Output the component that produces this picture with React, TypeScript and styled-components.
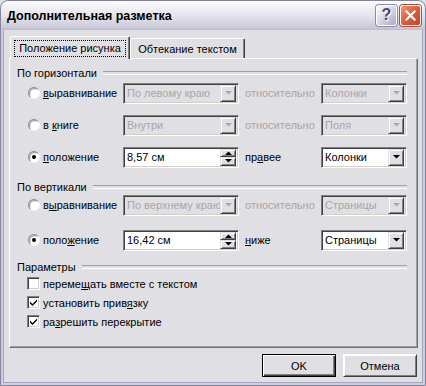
import * as React from "react";
import styled, { createGlobalStyle } from "styled-components";

const GlobalStyle = createGlobalStyle`
  html, body {
    margin: 0;
    padding: 0;
    background: #e0dfe3;
  }
  body {
    font-family: "Liberation Sans", Arial, sans-serif;
    font-size: 11px;
    color: #000;
  }
  * {
    box-sizing: border-box;
  }
`;

function Radio({ checked }: { checked?: boolean }) {
  return (
    <svg width="12" height="12" viewBox="0 0 12 12">
      <defs>
        <linearGradient id="rg" x1="0" y1="0" x2="1" y2="1">
          <stop offset="0" stopColor="#808080" />
          <stop offset="0.5" stopColor="#9a9a9e" />
          <stop offset="0.55" stopColor="#f4f4f4" />
          <stop offset="1" stopColor="#ffffff" />
        </linearGradient>
      </defs>
      <circle cx="6" cy="6" r="6" fill="url(#rg)" />
      <circle cx="6" cy="6" r="4.8" fill="#ffffff" />
      <path d="M2 8.2 A4.8 4.8 0 0 1 8.2 2" stroke="#404040" strokeWidth="0.9" fill="none" opacity="0.55" />
      {checked && <circle cx="6" cy="6" r="2" fill="#000" />}
    </svg>
  );
}

function CheckMark() {
  return (
    <svg width="9" height="9" viewBox="0 0 9 9">
      <path d="M1 3.5 L3.5 6 L8 1.5 L8 3.5 L3.5 8 L1 5.5 Z" fill="#000" />
    </svg>
  );
}

function Arrow({ disabled, up }: { disabled?: boolean; up?: boolean }) {
  const d = up ? "M0 4 L3.5 0.5 L7 4 Z" : "M0 0 L7 0 L3.5 3.5 Z";
  return (
    <svg width="7" height="4" viewBox="0 0 7 4">
      <path d={d} fill={disabled ? "#a7a6aa" : "#000"} />
    </svg>
  );
}

function Combo({ value, width, disabled }: { value: string; width: number; disabled?: boolean }) {
  return (
    <ComboBox $w={width} $disabled={disabled}>
      <ComboText $disabled={disabled}>{value}</ComboText>
      <ArrowButton>
        <Arrow disabled={disabled} />
      </ArrowButton>
    </ComboBox>
  );
}

function Spin({ value }: { value: string }) {
  return (
    <ComboBox $w={116}>
      <ComboText>{value}</ComboText>
      <SpinStack>
        <SpinHalf>
          <Arrow up />
        </SpinHalf>
        <SpinHalf>
          <Arrow />
        </SpinHalf>
      </SpinStack>
    </ComboBox>
  );
}

export default function App() {
  return (
    <>
      <GlobalStyle />
      <Window>
        <TitleBar>
          <Title>Дополнительная разметка</Title>
          <CaptionButton $kind="help">?</CaptionButton>
          <CaptionButton $kind="close">
            <svg width="11" height="11" viewBox="0 0 11 11">
              <path d="M1.5 1.5 L9.5 9.5 M9.5 1.5 L1.5 9.5" stroke="#fff" strokeWidth="2.2" strokeLinecap="square" />
            </svg>
          </CaptionButton>
        </TitleBar>
        <Body>
          <TabRow>
            <Tab $active>
              <FocusRect>Положение рисунка</FocusRect>
            </Tab>
            <Tab>Обтекание текстом</Tab>
          </TabRow>
          <Panel>
            <GroupHeader>По горизонтали</GroupHeader>
            <Row $top={2}>
              <Option>
                <Radio />
                <span>
                  <u>в</u>ыравнивание
                </span>
              </Option>
              <Combo value="По левому краю" width={116} disabled />
              <RelLabel $disabled>относительно</RelLabel>
              <Combo value="Колонки" width={86} disabled />
            </Row>
            <Row $top={10}>
              <Option>
                <Radio />
                <span>
                  в <u>к</u>ниге
                </span>
              </Option>
              <Combo value="Внутри" width={116} disabled />
              <RelLabel $disabled>относительно</RelLabel>
              <Combo value="Поля" width={86} disabled />
            </Row>
            <Row $top={10}>
              <Option>
                <Radio checked />
                <span>
                  <u>п</u>оложение
                </span>
              </Option>
              <Spin value="8,57 см" />
              <RelLabel>
                пр<u>а</u>вее
              </RelLabel>
              <Combo value="Колонки" width={86} />
            </Row>

            <GroupHeader $top={12}>По вертикали</GroupHeader>
            <Row $top={0}>
              <Option>
                <Radio />
                <span>
                  в<u>ы</u>равнивание
                </span>
              </Option>
              <Combo value="По верхнему краю" width={116} disabled />
              <RelLabel $disabled>относительно</RelLabel>
              <Combo value="Страницы" width={86} disabled />
            </Row>
            <Row $top={13}>
              <Option>
                <Radio checked />
                <span>
                  поло<u>ж</u>ение
                </span>
              </Option>
              <Spin value="16,42 см" />
              <RelLabel>
                <u>н</u>иже
              </RelLabel>
              <Combo value="Страницы" width={86} />
            </Row>

            <GroupHeader $top={9}>Параметры</GroupHeader>
            <CheckRow>
              <CheckBox />
              <span>
                переме<u>щ</u>ать вместе с текстом
              </span>
            </CheckRow>
            <CheckRow>
              <CheckBox>
                <CheckMark />
              </CheckBox>
              <span>
                установить прив<u>я</u>зку
              </span>
            </CheckRow>
            <CheckRow>
              <CheckBox>
                <CheckMark />
              </CheckBox>
              <span>
                ра<u>з</u>решить перекрытие
              </span>
            </CheckRow>
          </Panel>
          <ButtonRow>
            <PushButton $default>OK</PushButton>
            <PushButton>Отмена</PushButton>
          </ButtonRow>
        </Body>
      </Window>
    </>
  );
}

const Window = styled.div`
  width: 426px;
  height: 386px;
  display: flex;
  flex-direction: column;
  border: 1px solid #85849f;
  border-radius: 8px 8px 0 0;
  background: #cfcedc;
  padding: 0 2px 2px;
  overflow: hidden;
`;

const TitleBar = styled.div`
  height: 29px;
  margin: 0 -2px;
  display: flex;
  align-items: center;
  padding: 0 4px 1px 6px;
  gap: 3px;
  background: linear-gradient(to bottom, #ffffff 0%, #f3f3f7 18%, #e2e1ea 55%, #cbcad9 90%, #bdbccd 100%);
  border-radius: 7px 7px 0 0;
`;

const Title = styled.div`
  flex: 1;
  font: bold 12.5px "Liberation Sans", Arial, sans-serif;
  color: #000;
  padding-top: 2px;
`;

const CaptionButton = styled.div<{ $kind: "help" | "close" }>`
  width: 21px;
  height: 21px;
  display: flex;
  align-items: center;
  justify-content: center;
  border-radius: 3px;
  border: 1px solid #fff;
  box-shadow: 0 0 0 1px ${(p) => (p.$kind === "close" ? "#b1503a" : "#8c8ba8")};
  background: ${(p) =>
    p.$kind === "close"
      ? "linear-gradient(135deg, #f09b7d 0%, #e0603f 45%, #c9402a 100%)"
      : "linear-gradient(135deg, #fdfdfe 0%, #d7d6e3 50%, #a9a8c0 100%)"};
  font: bold 16px "Liberation Sans", Arial, sans-serif;
  color: #4a4968;
  text-shadow: 1px 1px 0 #fff;
`;

const Body = styled.div`
  flex: 1;
  background: #e0dfe3;
  border: 1px solid #a6a5bd;
  border-top: none;
  padding: 6px 4px 5px 5px;
  display: flex;
  flex-direction: column;
`;

const TabRow = styled.div`
  height: 22px;
  display: flex;
  align-items: flex-end;
  padding-left: 1px;
`;

const Tab = styled.div<{ $active?: boolean }>`
  position: relative;
  z-index: ${(p) => (p.$active ? 1 : 0)};
  width: ${(p) => (p.$active ? 120 : 115)}px;
  height: ${(p) => (p.$active ? 23 : 20)}px;
  margin-bottom: ${(p) => (p.$active ? -1 : 0)}px;
  display: flex;
  align-items: center;
  justify-content: center;
  background: #e0dfe3;
  border-top: 1px solid #fff;
  border-left: 1px solid #fff;
  border-right: 1px solid #404040;
  border-radius: 2px 2px 0 0;
  box-shadow: inset -1px 0 0 #808080;
  padding-top: ${(p) => (p.$active ? 0 : 1)}px;
`;

const FocusRect = styled.span`
  width: 112px;
  height: 17px;
  display: flex;
  align-items: center;
  justify-content: center;
  border: 1px dotted #000;
`;

const Panel = styled.div`
  height: 290px;
  background: #e0dfe3;
  border-top: 1px solid #fff;
  border-left: 1px solid #fff;
  border-right: 1px solid #6f6f6f;
  border-bottom: 1px solid #6f6f6f;
  box-shadow: inset -1px -1px 0 #a0a0a4;
  padding: 7px 10px 0 7px;
  display: flex;
  flex-direction: column;
`;

const GroupHeader = styled.div<{ $top?: number }>`
  height: 14px;
  margin-top: ${(p) => p.$top ?? 0}px;
  display: flex;
  align-items: center;
  gap: 6px;
  &::after {
    content: "";
    flex: 1;
    height: 2px;
    border-top: 1px solid #a0a0a4;
    border-bottom: 1px solid #fff;
  }
`;

const Row = styled.div<{ $top: number }>`
  height: 22px;
  margin-top: ${(p) => p.$top}px;
  display: flex;
  align-items: center;
  padding-left: 11px;
`;

const Option = styled.div`
  width: 95px;
  display: flex;
  align-items: center;
  gap: 3px;
`;

const RelLabel = styled.div<{ $disabled?: boolean }>`
  width: 76px;
  margin-left: 6px;
  color: ${(p) => (p.$disabled ? "#a7a6aa" : "#000")};
`;

const ComboBox = styled.div<{ $w: number; $disabled?: boolean }>`
  width: ${(p) => p.$w}px;
  height: 21px;
  display: flex;
  align-items: center;
  padding: 2px;
  background: ${(p) => (p.$disabled ? "#e0dfe3" : "#fff")};
  border: 1px solid;
  border-color: #808080 #fff #fff #808080;
  box-shadow: inset 1px 1px 0 #404040, inset -1px -1px 0 #d4d0c8;
`;

const ComboText = styled.span<{ $disabled?: boolean }>`
  flex: 1;
  padding-left: 1px;
  white-space: nowrap;
  overflow: hidden;
  color: ${(p) => (p.$disabled ? "#a7a6aa" : "#000")};
`;

const ArrowButton = styled.div`
  width: 16px;
  height: 17px;
  display: flex;
  align-items: center;
  justify-content: center;
  background: #e0dfe3;
  border: 1px solid;
  border-color: #e0dfe3 #404040 #404040 #e0dfe3;
  box-shadow: inset 1px 1px 0 #fff, inset -1px -1px 0 #808080;
`;

const SpinStack = styled.div`
  width: 16px;
  height: 17px;
  display: flex;
  flex-direction: column;
`;

const SpinHalf = styled.div`
  flex: 1;
  display: flex;
  align-items: center;
  justify-content: center;
  background: #e0dfe3;
  border: 1px solid;
  border-color: #e0dfe3 #404040 #404040 #e0dfe3;
  box-shadow: inset 1px 1px 0 #fff, inset -1px -1px 0 #808080;
`;

const CheckRow = styled.div`
  height: 19px;
  display: flex;
  align-items: center;
  gap: 3px;
  padding-left: 10px;
`;

const CheckBox = styled.div`
  width: 13px;
  height: 13px;
  display: flex;
  align-items: center;
  justify-content: center;
  background: #fff;
  border: 1px solid;
  border-color: #808080 #fff #fff #808080;
  box-shadow: inset 1px 1px 0 #404040, inset -1px -1px 0 #d4d0c8;
`;

const ButtonRow = styled.div`
  margin-top: 6px;
  display: flex;
  justify-content: flex-end;
  gap: 7px;
  padding-right: 1px;
`;

const PushButton = styled.div<{ $default?: boolean }>`
  width: 74px;
  height: 23px;
  display: flex;
  align-items: center;
  justify-content: center;
  background: #e0dfe3;
  border: 1px solid ${(p) => (p.$default ? "#000" : "#e0dfe3")};
  box-shadow: ${(p) =>
    p.$default
      ? "inset 1px 1px 0 #fff, inset -1px -1px 0 #404040, inset -2px -2px 0 #808080"
      : "inset 1px 1px 0 #fff, inset -1px -1px 0 #808080"};
  ${(p) => (p.$default ? "" : "border-color: #fff #404040 #404040 #fff;")}
`;
